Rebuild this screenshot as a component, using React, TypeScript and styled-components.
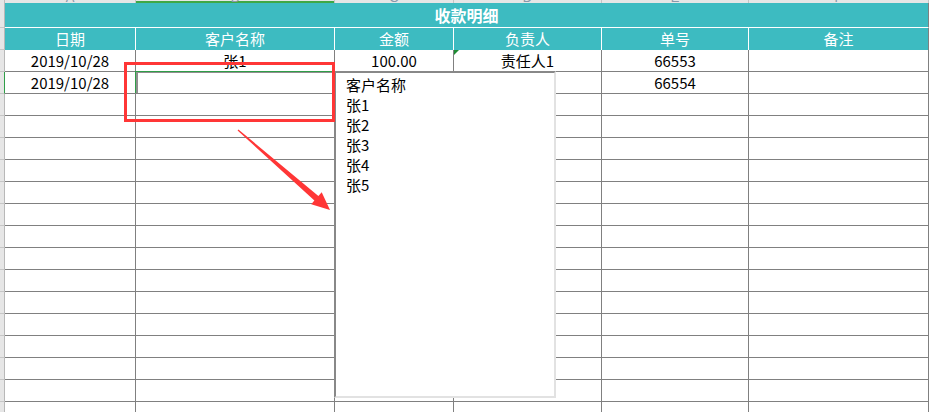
import styled, { createGlobalStyle, css } from 'styled-components'

const GlobalStyle = createGlobalStyle`
  html, body {
    margin: 0;
    padding: 0;
    background: #ffffff;
    overflow: hidden;
  }
  body {
    font-family: "Noto Sans CJK SC", "Noto Sans", sans-serif;
  }
`

const TEAL = '#3dbbc1'
const GRID = '#808080'
const GREEN = '#2f9e48'
const RED = '#ff3636'

const COL_WIDTHS = [131, 199, 119, 148, 147, 180]
const LETTERS = ['A', 'B', 'C', 'D', 'E', 'F']
const HEADERS = ['日期', '客户名称', '金额', '负责人', '单号', '备注']
const OPTIONS = ['客户名称', '张1', '张2', '张3', '张4', '张5']

const ROWS: string[][] = [
  ['2019/10/28', '张1', '100.00', '责任人1', '66553', ''],
  ['2019/10/28', '', '', '', '66554', '']
]
const ROW_COUNT = 17

const Page = styled.div`
  position: relative;
  width: 937px;
  height: 412px;
  overflow: hidden;
  background: #ffffff;
`

const Sheet = styled.div`
  display: grid;
  grid-template-columns: 5px ${COL_WIDTHS.map(w => `${w}px`).join(' ')};
  width: max-content;
`

const Corner = styled.div`
  height: 3px;
  background: #e6e6e6;
  border-right: 1px solid #bdbdbd;
  box-sizing: border-box;
`

const ColLetter = styled.div<{ $active?: boolean }>`
  height: 3px;
  overflow: hidden;
  box-sizing: border-box;
  background: #e6e6e6;
  border-right: 1px solid #c4c4c4;
  text-align: center;
  ${p => p.$active && css`
    box-shadow: inset 0 -2px 0 #3fa845;
  `}

  span {
    display: block;
    margin-top: -9px;
    font: 13px/13px "Liberation Sans", sans-serif;
    color: #8a98aa;
  }
`

const RowHead = styled.div<{ $active?: boolean }>`
  box-sizing: border-box;
  background: #e6e6e6;
  border-right: 1px solid ${p => (p.$active ? GREEN : '#b8b8b8')};
  border-bottom: 1px solid #c6c6c6;
`

const Title = styled.div`
  grid-column: span 6;
  box-sizing: border-box;
  height: 25px;
  background: ${TEAL};
  border-right: 1px solid ${GRID};
  border-bottom: 1px solid #ffffff;
  color: #ffffff;
  font-size: 16px;
  font-weight: bold;
  line-height: 24px;
  text-align: center;
`

const HeadCell = styled.div<{ $last?: boolean }>`
  box-sizing: border-box;
  height: 22px;
  background: ${TEAL};
  border-right: 1px solid ${p => (p.$last ? GRID : '#ffffff')};
  color: #ffffff;
  font-size: 15px;
  line-height: 21px;
  text-align: center;
`

const Cell = styled.div<{ $active?: boolean; $flag?: boolean }>`
  position: relative;
  box-sizing: border-box;
  height: 22px;
  border-right: 1px solid ${GRID};
  border-bottom: 1px solid ${GRID};
  color: #000000;
  font-size: 15px;
  line-height: 21px;
  text-align: center;
  white-space: nowrap;
  overflow: visible;

  ${p => p.$active && css`
    box-shadow: -1px -1px 0 ${GREEN}, inset 2px 1px 0 #8f8f8f;
  `}

  ${p => p.$flag && css`
    &::before {
      content: '';
      position: absolute;
      top: 0;
      left: 0;
      border-style: solid;
      border-width: 5px 5px 0 0;
      border-color: #1e8c33 transparent transparent transparent;
    }
  `}
`

const DropList = styled.ul`
  position: absolute;
  left: 334px;
  top: 71px;
  width: 222px;
  height: 327px;
  box-sizing: border-box;
  margin: 0;
  padding: 2px 10px;
  list-style: none;
  background: #ffffff;
  border-top: 2px solid #888888;
  border-left: 2px solid #888888;
  border-right: 2px solid #e2e2e2;
  border-bottom: 2px solid #e2e2e2;
`

const Option = styled.li`
  font-size: 15px;
  line-height: 20px;
  color: #000000;
`

const RedBox = styled.div`
  position: absolute;
  left: 124px;
  top: 62px;
  width: 211px;
  height: 60px;
  box-sizing: border-box;
  border: 3px solid ${RED};
`

const ArrowMark = styled.svg`
  position: absolute;
  left: 230px;
  top: 120px;
  width: 110px;
  height: 100px;
`

const App = () => {
  return (
    <>
      <GlobalStyle />
      <Page>
        <Sheet>
          <Corner />
          {LETTERS.map(l => (
            <ColLetter key={l} $active={l === 'B'}>
              <span>{l}</span>
            </ColLetter>
          ))}

          <RowHead />
          <Title>收款明细</Title>

          <RowHead />
          {HEADERS.map((h, i) => (
            <HeadCell key={h} $last={i === HEADERS.length - 1}>
              {h}
            </HeadCell>
          ))}

          {Array.from({ length: ROW_COUNT }).map((_, r) => {
            const data = ROWS[r] || ['', '', '', '', '', '']
            return [
              <RowHead key={`h${r}`} $active={r === 1} />,
              ...data.map((v, c) => (
                <Cell
                  key={`${r}-${c}`}
                  $active={r === 1 && c === 1}
                  $flag={r === 0 && c === 3}
                >
                  {v}
                </Cell>
              ))
            ]
          })}
        </Sheet>

        <DropList>
          {OPTIONS.map(o => (
            <Option key={o}>{o}</Option>
          ))}
        </DropList>

        <RedBox />

        <ArrowMark viewBox="0 0 110 100">
          <polygon
            fill={RED}
            points="8.4,9.5 88.4,75.9 91.7,72.2 100,90 81.2,84.2 84.4,80.5 7.6,10.5"
          />
        </ArrowMark>
      </Page>
    </>
  )
}

export default App
